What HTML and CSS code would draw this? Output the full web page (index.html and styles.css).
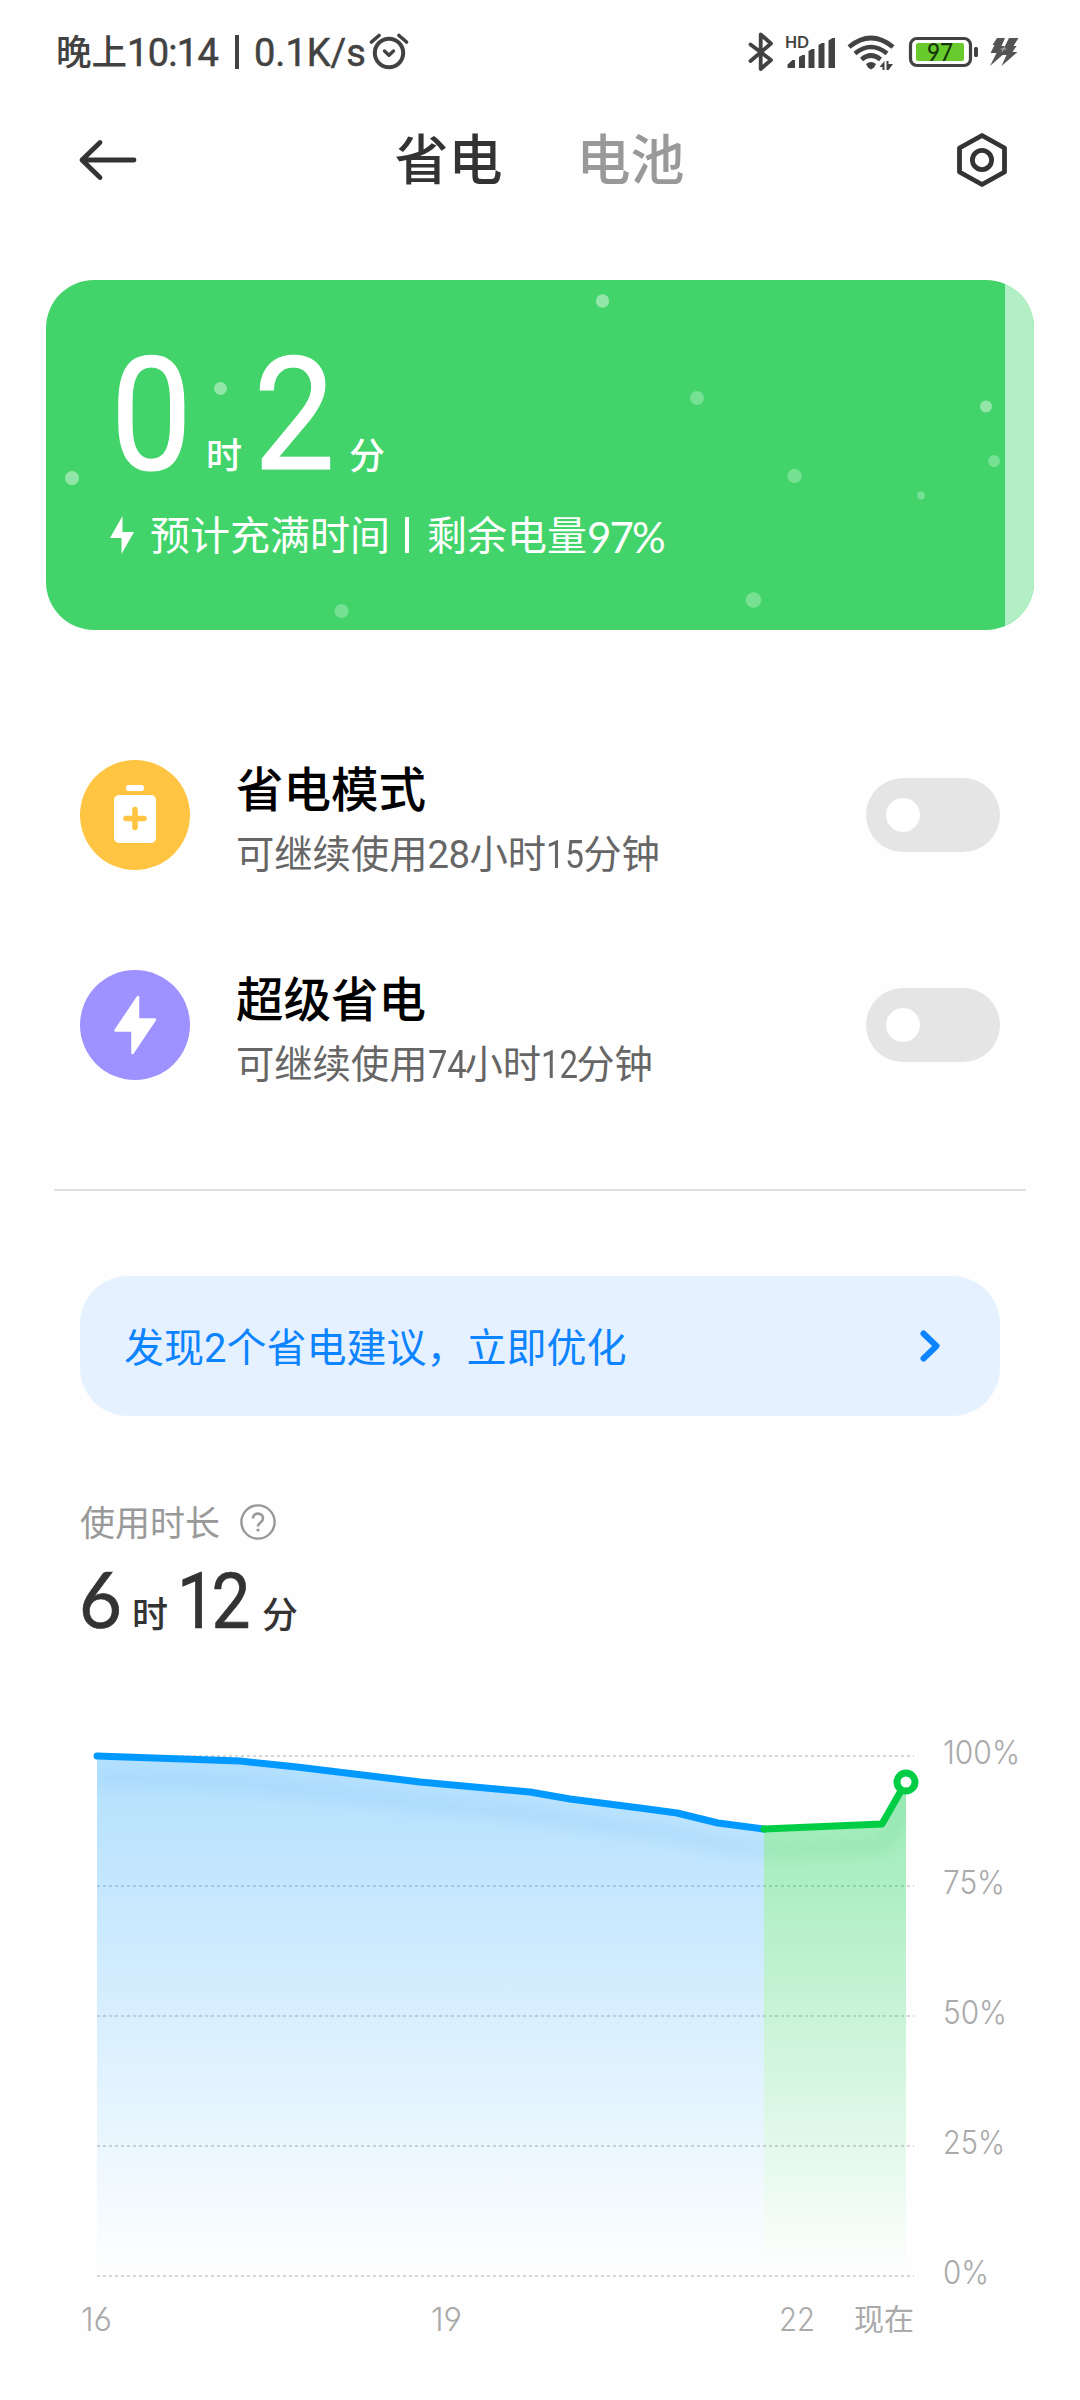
FILE: index.html
```html
<!DOCTYPE html>
<html lang="zh-CN">
<head>
<meta charset="utf-8">
<title>省电</title>
<link rel="stylesheet" href="styles.css">
</head>
<body>
<header class="status">
  <div class="status-left">
    <span class="cjk">晚上</span><span class="clock">10:14</span><i class="bar"></i><span class="speed">0.1K/s</span>
    <svg class="alarm" width="40" height="38" viewBox="0 0 40 38" fill="none" stroke="#424242"><circle cx="20" cy="20" r="14.200" stroke-width="4"/><path d="M15.500 18l4.500 4.200 4.500-4.200" stroke-width="3.400" stroke-linecap="round" stroke-linejoin="round"/><path d="M2.500 9L10 2.500M37.500 9L30 2.500" stroke-width="3.600" stroke-linecap="round"/></svg>
  </div>
  <svg class="status-icons" width="290" height="44" viewBox="738 30 290 44">
    <path d="M750.500 44.500L771 60L760.700 69V34.500L771 43.500L750.500 61" fill="none" stroke="#424242" stroke-width="3.800" stroke-linecap="round" stroke-linejoin="round"/>
    <text x="785" y="48" class="hd" textLength="24" lengthAdjust="spacingAndGlyphs">HD</text>
    <g fill="#424242"><path d="M787.500 68v-3.500l5-4.500h2.500v8zM799 68V57l3.500-2h2.500v13zM808.500 68V51l3.500-2h2.500v19zM818.500 68V45l3.500-2h2.500v25zM828.500 68V40.500l4-2.500h2.500V68z"/></g>
    <g fill="none" stroke="#424242" stroke-width="4.600"><path d="M849 47Q871 29 893 47M855 53.500Q871 40.500 887 53.500M861.500 59.500Q871 51.500 880.500 59.500"/></g>
    <path d="M866 64q5-4 10 0l-2 3.500-3 2-3-2z" fill="#424242"/>
    <path d="M879.500 67l5-6v9h-2v-3zM893 64l-4.500 6h-2v-9h2v3z" fill="#424242"/>
    <rect x="910.500" y="38.500" width="60" height="27" rx="6.500" fill="none" stroke="#424242" stroke-width="3.200"/>
    <rect x="916" y="43" width="48" height="18" rx="2" fill="#67ca2d"/>
    <rect x="974" y="47" width="4" height="10" rx="1.500" fill="#424242"/>
    <text x="927" y="60.800" class="pct" textLength="26" lengthAdjust="spacingAndGlyphs">97</text>
    <path d="M997 38h8l-3.500 8h3.500l4-8h9.500l-5 8h3l-4 6h5l-16 14 5-11h-4l-12.500 11 6.500-13h-6l4-8h-2z" fill="#555"/>
    <path d="M1005 46l-3 6M1000.500 49h6" stroke="#fff" stroke-opacity=".5" stroke-width="1"/>
  </svg>
</header>
<nav class="nav">
  <svg width="60" height="44" viewBox="0 0 60 44" fill="none" stroke="#333" stroke-width="4.800" stroke-linecap="round" stroke-linejoin="round"><path d="M57 22H5M23 4.500L5 22l18 17.500"/></svg>
  <div class="tabs"><span class="tab active">省电</span><span class="tab">电池</span></div>
  <svg width="52" height="56" viewBox="0 0 52 56" fill="none" stroke="#333" stroke-width="4.800" stroke-linejoin="round"><path d="M26 3.500L48.500 16v24L26 52.500 3.500 40V16z"/><circle cx="26" cy="28" r="9.600"/></svg>
</nav>
<main>
  <section class="hero">
    <svg class="bubbles" width="988" height="350" viewBox="46 280 988 350" fill="#fff">
      <rect x="1005" y="280" width="29" height="350" fill="#b3efc5"/>
      <g opacity=".42"><circle cx="220.500" cy="388.500" r="6.500"/><circle cx="72" cy="478" r="7"/><circle cx="602.500" cy="301" r="6.700"/><circle cx="986" cy="406.500" r="6"/></g>
      <g opacity=".28"><circle cx="341.500" cy="611" r="7"/><circle cx="697" cy="398" r="7"/><circle cx="794.500" cy="476" r="7.200"/><circle cx="753.500" cy="600" r="7.700"/><circle cx="921" cy="495.500" r="4"/><circle cx="994" cy="461" r="6"/></g>
    </svg>
    <div class="hero-time"><b>0</b><span>时</span><b>2</b><span>分</span></div>
    <div class="hero-note">
      <svg width="24" height="40" viewBox="0 0 24 40" fill="#fff"><path d="M12.500 1v16H24L11.500 39V23H0z"/></svg>
      <span class="cjk">预计充满时间</span><i class="bar"></i><span class="cjk">剩余电量</span><span class="num">97%</span>
    </div>
  </section>
  <section class="modes">
    <div class="mode">
      <svg width="110" height="110" viewBox="0 0 110 110"><circle cx="55" cy="55" r="55" fill="#ffc542"/><rect x="46" y="25" width="18" height="6" rx="2.500" fill="#fff"/><rect x="34" y="35" width="42" height="48" rx="5" fill="#fff"/><path d="M55 49.500v18M46 58.500h18" stroke="#ffc542" stroke-width="5.600" stroke-linecap="round"/></svg>
      <div class="mode-text"><h2>省电模式</h2><p>可继续使用<span class="d28">28</span>小时<span class="d15">15</span>分钟</p></div>
      <i class="toggle"></i>
    </div>
    <div class="mode">
      <svg width="110" height="110" viewBox="0 0 110 110"><circle cx="55" cy="55" r="55" fill="#9d92ff"/><path d="M58 27v22.500h17L52.500 83V60.500H35.500z" fill="#fff" stroke="#fff" stroke-width="2.500" stroke-linejoin="round"/></svg>
      <div class="mode-text"><h2>超级省电</h2><p>可继续使用<span class="d74">74</span>小时<span class="d12">12</span>分钟</p></div>
      <i class="toggle"></i>
    </div>
  </section>
  <hr>
  <section class="tip">
    <p>发现<span>2</span>个省电建议，立即优化</p>
    <svg width="22" height="36" viewBox="0 0 22 36" fill="none" stroke="#0d84ff" stroke-width="6" stroke-linecap="round" stroke-linejoin="round"><path d="M4.500 5.500L17.500 18 4.500 30.500"/></svg>
  </section>
  <section class="usage">
    <div class="usage-label"><span>使用时长</span>
      <svg width="36" height="36" viewBox="0 0 36 36" fill="none" stroke="#999" stroke-width="2.400"><circle cx="18" cy="18" r="16.600"/><path d="M13 14.500c0-6.500 10-6.500 10 0 0 4-5 4-5 8" stroke-width="2.600"/><circle cx="18" cy="26" r="1.600" fill="#999" stroke="none"/></svg>
    </div>
    <div class="usage-time"><b>6</b><span>时</span><b class="twelve">12</b><span>分</span></div>
  </section>
  <svg class="chart" width="1080" height="680" viewBox="0 1720 1080 680">
    <defs>
      <linearGradient id="blue" gradientUnits="userSpaceOnUse" x1="0" y1="1756" x2="0" y2="2276"><stop stop-color="#09f" stop-opacity=".3"/><stop offset="1" stop-color="#09f" stop-opacity="0"/></linearGradient>
      <linearGradient id="green" gradientUnits="userSpaceOnUse" x1="0" y1="1756" x2="0" y2="2276"><stop stop-color="#00cd46" stop-opacity=".42"/><stop offset="1" stop-color="#00cd46" stop-opacity="0"/></linearGradient>
      <filter id="soft" x="-10%" y="-100%" width="120%" height="300%"><feGaussianBlur stdDeviation="7"/></filter>
      <clipPath id="area"><path d="M97 1756L240 1761 297 1767 420 1782 530 1792 570 1799 640 1808 677 1813 718 1823 764 1829 882 1824 906 1782V2276H97z"/></clipPath>
    </defs>
    <path class="grid" d="M97 1756H914M97 1886H914M97 2016H914M97 2146H914M97 2276H914"/>
    <path d="M97 1756L240 1761 297 1767 420 1782 530 1792 570 1799 640 1808 677 1813 718 1823 764 1829V2276H97z" fill="url(#blue)"/>
    <path d="M764 1829L882 1824 906 1782V2276H764z" fill="url(#green)"/>
    <g clip-path="url(#area)"><g filter="url(#soft)" fill="none" stroke-width="14" opacity=".07">
      <path d="M97 1778L240 1783 297 1789 420 1804 530 1814 570 1821 640 1830 677 1835 718 1845 764 1851" stroke="#0080e0"/>
      <path d="M764 1851L882 1846 906 1804" stroke="#00b040"/>
    </g></g>
    <g fill="none" stroke-width="7" stroke-linecap="round" stroke-linejoin="round">
      <path d="M97 1756L240 1761 297 1767 420 1782 530 1792 570 1799 640 1808 677 1813 718 1823 764 1829" stroke="#09f"/>
      <path d="M764 1829L882 1824 906 1782" stroke="#00cd46"/>
    </g>
    <circle cx="906" cy="1782" r="9" fill="#fff" stroke="#00cd46" stroke-width="7"/>
    <g class="axis">
      <text x="943" y="1764" textLength="77" lengthAdjust="spacingAndGlyphs">100%</text><text x="943" y="1894" textLength="62" lengthAdjust="spacingAndGlyphs">75%</text><text x="943" y="2024" textLength="64" lengthAdjust="spacingAndGlyphs">50%</text><text x="943" y="2154" textLength="62" lengthAdjust="spacingAndGlyphs">25%</text><text x="943" y="2284" textLength="46" lengthAdjust="spacingAndGlyphs">0%</text>
      <text x="81" y="2331" textLength="31" lengthAdjust="spacingAndGlyphs">16</text><text x="431" y="2331" textLength="31" lengthAdjust="spacingAndGlyphs">19</text><text x="779" y="2331" textLength="36" lengthAdjust="spacingAndGlyphs">22</text><text x="854" y="2330" class="now" textLength="60">现在</text>
    </g>
  </svg>
</main>
</body>
</html>
```
FILE: styles.css
```css
* { box-sizing: border-box; margin: 0; padding: 0; }
body { width: 1080px; height: 2400px; overflow: hidden; background: #fefefe; font-family: Roboto, "Noto Sans CJK SC", sans-serif; color: #333; }
svg { display: block; flex: none; }
span, b, i { flex: none; white-space: nowrap; }

.status { height: 104px; padding: 0 52px 0 56px; display: flex; align-items: center; justify-content: space-between; color: #424242; }
.status-left { display: flex; align-items: center; height: 104px; font-size: 38px; line-height: 104px; }
.status-left span { padding-top: 2px; -webkit-text-stroke: .5px #424242; }
.status-left .cjk { width: 71px; font-size: 35.5px; font-weight: 500; -webkit-text-stroke: 0; }
.status-left .clock { width: 91px; letter-spacing: -.7px; }
.status-left .bar { width: 4px; height: 34px; margin: 0 15px 0 17px; background: #424242; }
.status-left .speed { width: 111px; }
.alarm { margin-left: 4px; }
.hd { font: 700 17px Lato, sans-serif; fill: #424242; }
.pct { font: 500 24px Lato, sans-serif; fill: #16350a; }

.nav { height: 112px; padding: 0 72px 0 77px; display: flex; align-items: center; justify-content: space-between; }
.tabs { display: flex; gap: 74px; margin-right: 14px; }
.tab { font-size: 54px; font-weight: 500; line-height: 112px; padding-top: 4px; color: #999; }
.tab.active { color: #333; }

.hero { position: relative; height: 350px; margin: 64px 46px 0; border-radius: 48px; overflow: hidden; background: #42d46a; color: #fff; padding: 60px 64px 0; }
.bubbles { position: absolute; left: 0; top: 0; }
.hero-time { position: relative; display: flex; align-items: baseline; height: 150px; line-height: 150px; }
.hero-time b { font-size: 157px; font-weight: 400; width: 96px; transform: scaleX(.92); transform-origin: 8px 50%; -webkit-text-stroke: 1.2px #fff; }
.hero-time span { font-size: 36px; font-weight: 500; width: 45px; }
.hero-time span:nth-child(2) { width: 47px; }
.hero-note { position: relative; display: flex; align-items: center; height: 60px; line-height: 60px; margin-top: 15px; font-size: 40px; }
.hero-note span { padding-top: 3px; }
.hero-note svg { margin-right: 16px; }
.hero-note .bar { width: 4px; height: 36px; margin: 0 18px 0 15px; background: #fff; }
.hero-note .num { font-family: Lato, sans-serif; font-size: 42px; letter-spacing: -1.8px; }

.modes { padding: 130px 80px 0; display: grid; gap: 100px; }
.mode { display: flex; align-items: center; height: 110px; }
.mode-text { flex: 1; margin-left: 46px; padding-top: 10px; }
.mode-text h2 { font-size: 47.5px; font-weight: 500; line-height: 60px; color: #000; }
.mode-text p { font-size: 38.3px; line-height: 50px; margin-top: 9px; color: #666; }
.mode-text span { display: inline-block; transform-origin: 0 50%; }
.d28 { letter-spacing: -.5px; }
.d15 { transform: scaleX(.88); margin-right: -6px; }
.d74 { transform: scaleX(.9); margin-right: -6px; }
.d12 { transform: scaleX(.86); margin-right: -8px; }
.toggle { width: 134px; height: 74px; border-radius: 37px; background: #e5e5e5; padding: 20px; }
.toggle::before { content: ""; display: block; width: 34px; height: 34px; border-radius: 50%; background: #fff; }

hr { border: 0; height: 2px; background: #e0e0e0; margin: 109px 54px 0; }
.tip { height: 140px; margin: 85px 80px 0; border-radius: 48px; background: #e5f1ff; color: #0d84ff; display: flex; align-items: center; justify-content: space-between; padding: 0 59px 0 44px; font-size: 40px; }
.tip p { padding-bottom: 3px; }

.usage { padding: 76px 80px 0; }
.usage-label { display: flex; align-items: center; height: 60px; font-size: 35px; color: #999; gap: 20px; }
.usage-label span { padding-bottom: 3px; }
.usage-time { display: flex; align-items: baseline; height: 84px; line-height: 92px; }
.usage-time b { font: 400 78px/92px Lato, sans-serif; width: 53px; margin-left: -1px; -webkit-text-stroke: .7px #333; transform: scaleX(.95); transform-origin: 0 50%; }
.usage-time .twelve { font-family: Roboto, sans-serif; width: 85px; margin-left: -3px; letter-spacing: -5px; transform: scaleX(.89); }
.usage-time span { font-size: 36px; font-weight: 500; width: 48px; }

.chart { margin-top: 84px; }
.grid { stroke: #000; stroke-opacity: .16; stroke-width: 2; stroke-dasharray: 3 3; }
.axis { font: 300 32px Inter, "Noto Sans CJK SC", sans-serif; font-feature-settings: "cv03", "cv04"; fill: #aaa; }
.now { font-size: 30px; font-weight: 400; font-family: "Noto Sans CJK SC", sans-serif; }
```
